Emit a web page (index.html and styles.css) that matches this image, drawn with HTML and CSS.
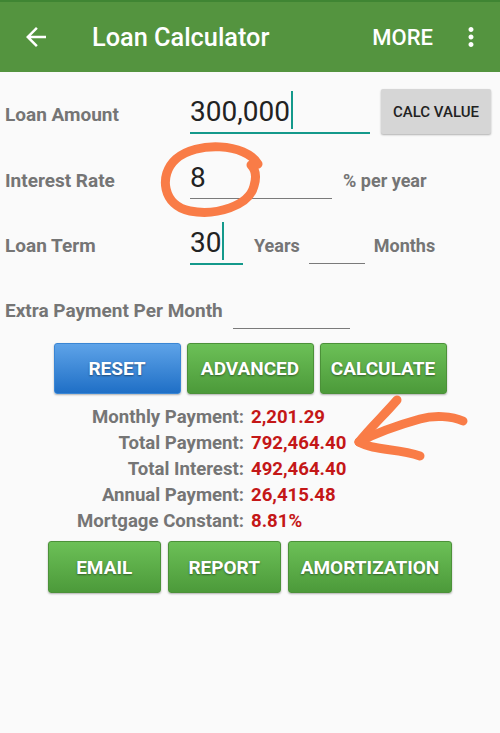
FILE: index.html
```html
<!DOCTYPE html>
<html lang="en">
<head>
<title>Loan Calculator</title>
<meta charset="UTF-8">
<link rel="stylesheet" href="styles.css">
</head>
<body>
  <header class="appbar">
    <svg class="icon back" viewBox="0 0 24 24"><path d="M20 11H7.83l5.59-5.59L12 4l-8 8 8 8 1.41-1.41L7.83 13H20v-2z"/></svg>
    <h1 class="title">Loan Calculator</h1>
    <span class="action">MORE</span>
    <svg class="icon menu" viewBox="0 0 24 24"><path d="M12 8c1.1 0 2-.9 2-2s-.9-2-2-2-2 .9-2 2 .9 2 2 2zm0 2c-1.1 0-2 .9-2 2s.9 2 2 2 2-.9 2-2-.9-2-2-2zm0 6c-1.1 0-2 .9-2 2s.9 2 2 2 2-.9 2-2-.9-2-2-2z"/></svg>
  </header>

  <main class="form">
    <div class="row row-amount">
      <span class="label">Loan Amount</span>
      <div class="field field-amount active">300,000<span class="caret"></span></div>
      <button class="btn-flat" type="button">CALC VALUE</button>
    </div>

    <div class="row row-rate">
      <span class="label">Interest Rate</span>
      <div class="field field-rate">8</div>
      <span class="unit">% per year</span>
    </div>

    <div class="row row-term">
      <span class="label">Loan Term</span>
      <div class="field field-years active">30<span class="caret"></span></div>
      <span class="unit">Years</span>
      <div class="field field-months"></div>
      <span class="unit unit-months">Months</span>
    </div>

    <div class="row row-extra">
      <span class="label label-wide">Extra Payment Per Month</span>
      <div class="field field-extra"></div>
    </div>

    <div class="buttons buttons-top">
      <button class="btn btn-blue" type="button">RESET</button>
      <button class="btn btn-green" type="button">ADVANCED</button>
      <button class="btn btn-green" type="button">CALCULATE</button>
    </div>

    <div class="results">
      <span class="res-label">Monthly Payment:</span><span class="res-value">2,201.29</span>
      <span class="res-label">Total Payment:</span><span class="res-value">792,464.40</span>
      <span class="res-label">Total Interest:</span><span class="res-value">492,464.40</span>
      <span class="res-label">Annual Payment:</span><span class="res-value">26,415.48</span>
      <span class="res-label">Mortgage Constant:</span><span class="res-value">8.81%</span>
    </div>

    <div class="buttons buttons-bottom">
      <button class="btn btn-green" type="button">EMAIL</button>
      <button class="btn btn-green" type="button">REPORT</button>
      <button class="btn btn-green" type="button">AMORTIZATION</button>
    </div>
  </main>

  <!-- hand-drawn marks over the screen -->
  <svg class="marks" viewBox="0 0 500 733">
    <path d="M258 164 C246 143 196 141 176 159 C158 175 163 206 190 211 C216 216 249 206 254 186 C257 176 256 170 251 165"/>
    <path d="M397 400 C385 414 370 428 359 442"/>
    <path d="M463 421 C452 416 434 415 420 419 C402 424 378 432 359 442"/>
    <path d="M359 442 C374 451 398 448 420 456"/>
  </svg>
</body>
</html>
```

FILE: styles.css
```css
body {
    margin: 0;
    font-family: Roboto, "Noto Sans", sans-serif;
    background-color: #fafafa;
    position: relative;
    width: 500px;
    height: 733px;
    overflow: hidden;
}
.appbar {
    height: 70px;
    border-top: 2px solid #3f8533;
    background-color: #54943f;
    display: flex;
    align-items: center;
    color: #ffffff;
}
.icon {
    width: 30px;
    height: 30px;
    fill: #ffffff;
    flex: none;
}
.back {
    margin-left: 21px;
}
.title {
    margin: 0 0 0 41px;
    font-size: 25.3px;
    font-weight: 500;
    flex: 1;
}
.action {
    font-size: 22px;
    font-weight: 500;
    margin-right: 23px;
}
.menu {
    margin-right: 14px;
}

.form {
    padding-left: 5px;
}
.row {
    display: flex;
    align-items: baseline;
}
.row-amount {
    margin-top: 19px;
}
.row-rate {
    margin-top: 23px;
}
.row-term {
    margin-top: 23px;
}
.row-extra {
    margin-top: 22px;
    align-items: flex-end;
}
.row-extra .label {
    margin-bottom: 8px;
}
.label {
    flex: 0 0 185px;
    font-size: 19px;
    line-height: 20px;
    font-weight: bold;
    color: #757575;
}
.label-wide {
    flex: none;
    margin-right: 10px;
}
.unit {
    font-size: 18px;
    line-height: 20px;
    font-weight: bold;
    color: #757575;
    margin-left: 11px;
}
.unit-months {
    margin-left: 9px;
}
.field {
    height: 41px;
    line-height: 41px;
    font-size: 28px;
    color: #222222;
    border-bottom: 1px solid #7a7a7a;
    white-space: nowrap;
}
.field.active {
    border-bottom: 2px solid #14998b;
}
.caret {
    display: inline-block;
    vertical-align: top;
    width: 2px;
    height: 38px;
    margin-left: 1px;
    background-color: #14998b;
}
.field-amount {
    width: 180px;
}
.field-rate {
    width: 142px;
}
.field-years {
    width: 53px;
}
.field-months {
    align-self: flex-start;
    width: 56px;
    margin-left: 9px;
}
.field-extra {
    width: 117px;
}
.btn-flat {
    align-self: flex-start;
    margin: -2px 0 0 11px;
    width: 110px;
    height: 45px;
    border: none;
    border-radius: 2px;
    background-color: #d6d6d6;
    box-shadow: 0 1px 2px rgba(0, 0, 0, 0.3);
    font-family: Roboto, sans-serif;
    font-size: 15px;
    font-weight: 500;
    color: #222222;
    padding: 0;
}

.buttons {
    display: flex;
    justify-content: center;
    margin-left: -5px;
}
.buttons-top {
    margin-top: 14px;
    gap: 6px;
}
.buttons-top .btn {
    width: 127px;
    height: 51px;
}
.buttons-bottom {
    margin-top: 7px;
    gap: 7px;
}
.buttons-bottom .btn {
    min-width: 113px;
    height: 52px;
    padding: 0 12px;
}
.btn {
    border-radius: 3px;
    font-family: Roboto, sans-serif;
    font-size: 19px;
    font-weight: bold;
    color: #ffffff;
    text-shadow: 0 1px 2px rgba(0, 0, 0, 0.45);
    box-shadow: 0 1px 2px rgba(0, 0, 0, 0.3);
    padding: 0;
}
.btn-green {
    border: 1px solid #4c9139;
    background: linear-gradient(#6cc057, #4c9a3a);
}
.btn-blue {
    border: 1px solid #3a86d4;
    background: linear-gradient(#5ea3e8, #1f6fc6);
}

.results {
    display: grid;
    grid-template-columns: 239px auto;
    column-gap: 7px;
    margin-top: 10px;
    font-size: 18.6px;
    line-height: 26px;
    font-weight: bold;
}
.res-label {
    text-align: right;
    color: #757575;
}
.res-value {
    color: #c41717;
}

.marks {
    position: absolute;
    top: 0;
    left: 0;
    width: 500px;
    height: 733px;
    fill: none;
    stroke: #f97c47;
    stroke-width: 9;
    stroke-linecap: round;
    stroke-linejoin: round;
    pointer-events: none;
}
```
